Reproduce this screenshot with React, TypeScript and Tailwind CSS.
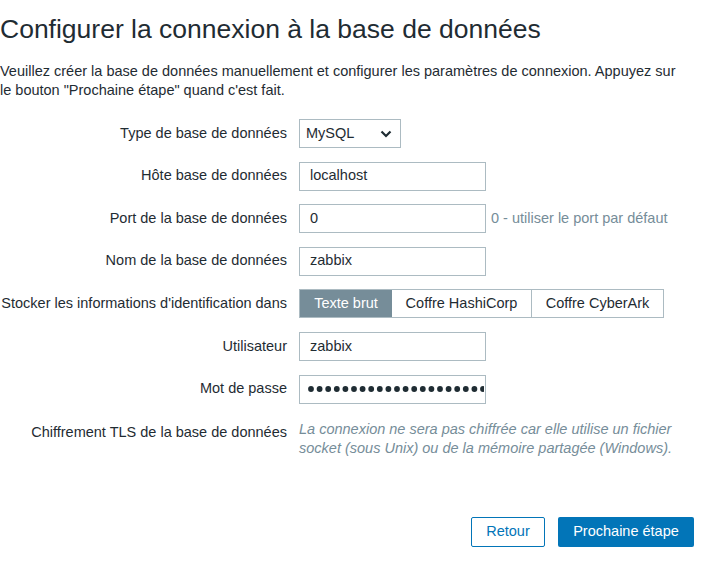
import React from "react";

const Row = ({ label, children, top = false }: { label: string; children: React.ReactNode; top?: boolean }) => (
  <div className={`flex ${top ? "mt-[3px] items-start" : "items-center"}`}>
    <div className={`w-[287px] shrink-0 text-right ${top ? "pt-[2px]" : ""}`}>{label}</div>
    <div className="ml-[12px] flex items-center">{children}</div>
  </div>
);

const TextBox = ({ value }: { value: string }) => (
  <div className="flex h-[29px] w-[187px] items-center border border-[#acbbc2] bg-white px-[10px]">{value}</div>
);

export default function App() {
  return (
    <div
      className="min-h-screen bg-white text-[14.5px] text-[#1f2c33]"
      style={{ fontFamily: '"Liberation Sans", Arial, sans-serif' }}
    >
      <h1 className="pt-[13px] text-[26.5px] leading-[32px]">Configurer la connexion à la base de données</h1>
      <p className="mt-[17px] w-[685px] leading-[19px]">
        Veuillez créer la base de données manuellement et configurer les paramètres de connexion. Appuyez sur le bouton
        "Prochaine étape" quand c'est fait.
      </p>

      <div className="mt-[19px] flex flex-col gap-[13.6px]">
        <Row label="Type de base de données">
          <div className="flex h-[29px] w-[102px] items-center justify-between border border-[#acbbc2] bg-white pl-[6px] pr-[8px]">
            <span>MySQL</span>
            <svg width="12" height="8" viewBox="0 0 12 8">
              <path d="M1.5 1.5 L6 6 L10.5 1.5" fill="none" stroke="#1f2c33" strokeWidth="2.2" />
            </svg>
          </div>
        </Row>
        <Row label="Hôte base de données">
          <TextBox value="localhost" />
        </Row>
        <Row label="Port de la base de données">
          <TextBox value="0" />
          <span className="ml-[5px] text-[#768d99]">0 - utiliser le port par défaut</span>
        </Row>
        <Row label="Nom de la base de données">
          <TextBox value="zabbix" />
        </Row>
        <Row label="Stocker les informations d'identification dans">
          <div className="flex h-[29px] border border-[#acbbc2]">
            <div className="flex w-[92px] items-center justify-center bg-[#768d99] text-white">Texte brut</div>
            <div className="flex w-[140px] items-center justify-center border-r border-[#acbbc2]">Coffre HashiCorp</div>
            <div className="flex w-[131px] items-center justify-center">Coffre CyberArk</div>
          </div>
        </Row>
        <Row label="Utilisateur">
          <TextBox value="zabbix" />
        </Row>
        <Row label="Mot de passe">
          <div className="flex h-[29px] w-[187px] items-center overflow-hidden border border-[#acbbc2] bg-white pl-[8px]">
            <svg width="176" height="8" viewBox="0 0 176 8" className="shrink-0">
              {Array.from({ length: 21 }).map((_, i) => (
                <circle key={i} cx={3 + i * 8.6} cy={4} r={2.9} fill="#1f2c33" />
              ))}
            </svg>
          </div>
        </Row>
        <Row label="Chiffrement TLS de la base de données" top>
          <p className="w-[390px] italic leading-[19px] text-[#768d99]">
            La connexion ne sera pas chiffrée car elle utilise un fichier socket (sous Unix) ou de la mémoire partagée
            (Windows).
          </p>
        </Row>
      </div>

      <div className="mt-[59px] flex justify-end gap-[13px] pr-[33px]">
        <button className="h-[30px] w-[74px] rounded-[2px] border border-[#0275b8] bg-white text-[#0275b8]">Retour</button>
        <button className="h-[30px] w-[136px] rounded-[2px] bg-[#0275b8] text-white">Prochaine étape</button>
      </div>
    </div>
  );
}
